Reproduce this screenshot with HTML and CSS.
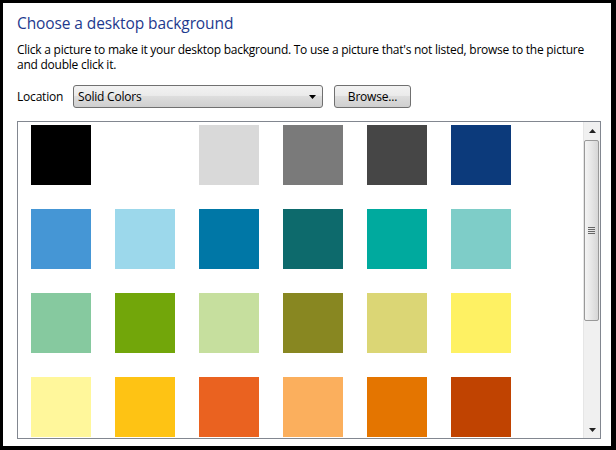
FILE: index.html
```html
<!DOCTYPE html>
<html lang="en">
<head>
    <meta charset="UTF-8">
    <title>Choose a desktop background</title>
    <link rel="stylesheet" href="styles.css">
</head>
<body>
    <div class="window">
        <h1 class="title">Choose a desktop background</h1>
        <p class="desc">Click a picture to make it your desktop background. To use a picture that's not listed, browse to the picture<br>and double click it.</p>

        <div class="location-row">
            <span class="label">Location</span>
            <div class="combo">
                <span>Solid Colors</span>
                <svg class="combo-arrow" width="7" height="4" viewBox="0 0 7 4"><path d="M0 0h7L3.5 4z" fill="#000"/></svg>
            </div>
            <button class="btn">Browse...</button>
        </div>

        <div class="listbox">
            <div class="swatches">
                <div class="swatch" style="background:#000000"></div>
                <div class="swatch" style="background:#ffffff"></div>
                <div class="swatch" style="background:#d9d9d9"></div>
                <div class="swatch" style="background:#7a7a7a"></div>
                <div class="swatch" style="background:#464646"></div>
                <div class="swatch" style="background:#0c3a7b"></div>

                <div class="swatch" style="background:#4596d5"></div>
                <div class="swatch" style="background:#9cd8eb"></div>
                <div class="swatch" style="background:#0077a6"></div>
                <div class="swatch" style="background:#0d6a6c"></div>
                <div class="swatch" style="background:#00aa9e"></div>
                <div class="swatch" style="background:#7ecdc8"></div>

                <div class="swatch" style="background:#86c99f"></div>
                <div class="swatch" style="background:#72a60a"></div>
                <div class="swatch" style="background:#c6df9e"></div>
                <div class="swatch" style="background:#888721"></div>
                <div class="swatch" style="background:#dbd675"></div>
                <div class="swatch" style="background:#fef163"></div>

                <div class="swatch" style="background:#fff79b"></div>
                <div class="swatch" style="background:#fec314"></div>
                <div class="swatch" style="background:#ea6220"></div>
                <div class="swatch" style="background:#fbaf5d"></div>
                <div class="swatch" style="background:#e47500"></div>
                <div class="swatch" style="background:#c04301"></div>

                <div class="swatch" style="background:#9d0a0e"></div>
                <div class="swatch" style="background:#f26d7d"></div>
                <div class="swatch" style="background:#c1272d"></div>
                <div class="swatch" style="background:#ec008c"></div>
                <div class="swatch" style="background:#8c6239"></div>
                <div class="swatch" style="background:#662d91"></div>
            </div>

            <div class="scrollbar">
                <div class="sb-btn">
                    <svg width="7" height="4" viewBox="0 0 7 4"><path d="M3.5 0L7 4H0z" fill="#222"/></svg>
                </div>
                <div class="sb-track">
                    <div class="sb-thumb">
                        <svg width="7" height="8" viewBox="0 0 7 8">
                            <path d="M0 0.5h7M0 2.5h7M0 4.5h7M0 6.5h7" stroke="#666" stroke-width="1"/>
                        </svg>
                    </div>
                </div>
                <div class="sb-btn">
                    <svg width="7" height="4" viewBox="0 0 7 4"><path d="M0 0h7L3.5 4z" fill="#222"/></svg>
                </div>
            </div>
        </div>
    </div>
</body>
</html>
```

FILE: styles.css
```css
* {
    margin: 0;
    padding: 0;
    box-sizing: border-box;
}

body {
    background: #000;
    font-family: 'Open Sans', 'Noto Sans', sans-serif;
    font-size: 12px;
    color: #000;
    padding: 3px 5px 4px 3px;
    height: 450px;
}

.window {
    background: #fff;
    height: 443px;
    padding: 10px 0 0 14px;
}

.title {
    font-size: 15.5px;
    font-weight: 400;
    color: #1e3a8e;
    line-height: 20px;
    letter-spacing: -0.1px;
}

.desc {
    margin-top: 9px;
    line-height: 15px;
    letter-spacing: -0.25px;
}

.location-row {
    display: flex;
    align-items: center;
    margin-top: 13px;
    height: 23px;
}

.label {
    width: 56px;
    letter-spacing: -0.2px;
}

.combo {
    width: 250px;
    height: 23px;
    border: 1px solid #707070;
    border-radius: 3px;
    background: linear-gradient(#f2f2f2 0%, #ebebeb 45%, #dddddd 50%, #cfcfcf 100%);
    display: flex;
    align-items: center;
    justify-content: space-between;
    padding: 0 6px 0 4px;
    letter-spacing: -0.2px;
}

.btn {
    margin-left: 11px;
    width: 77px;
    height: 23px;
    border: 1px solid #707070;
    border-radius: 3px;
    background: linear-gradient(#f2f2f2 0%, #ebebeb 45%, #dddddd 50%, #cfcfcf 100%);
    font-family: inherit;
    font-size: 12px;
    letter-spacing: -0.2px;
    color: #000;
}

.listbox {
    margin-top: 13px;
    width: 584px;
    height: 318px;
    border: 1px solid #828790;
    display: flex;
    overflow: hidden;
}

.swatches {
    flex: 1;
    display: grid;
    grid-template-columns: repeat(6, 60px);
    grid-auto-rows: 60px;
    gap: 24px;
    padding: 3px 0 0 13px;
    overflow: hidden;
}

.scrollbar {
    width: 17px;
    display: flex;
    flex-direction: column;
    background: #f0f0f0;
    border-left: 1px solid #e6e6e6;
}

.sb-btn {
    height: 17px;
    display: flex;
    align-items: center;
    justify-content: center;
}

.sb-track {
    flex: 1;
}

.sb-thumb {
    height: 181px;
    margin: 1px 1px 0 0;
    border: 1px solid #999;
    border-radius: 2px;
    background: linear-gradient(90deg, #f4f4f4, #e6e6e6 50%, #d6d6d6);
    display: flex;
    align-items: center;
    justify-content: center;
}
```
